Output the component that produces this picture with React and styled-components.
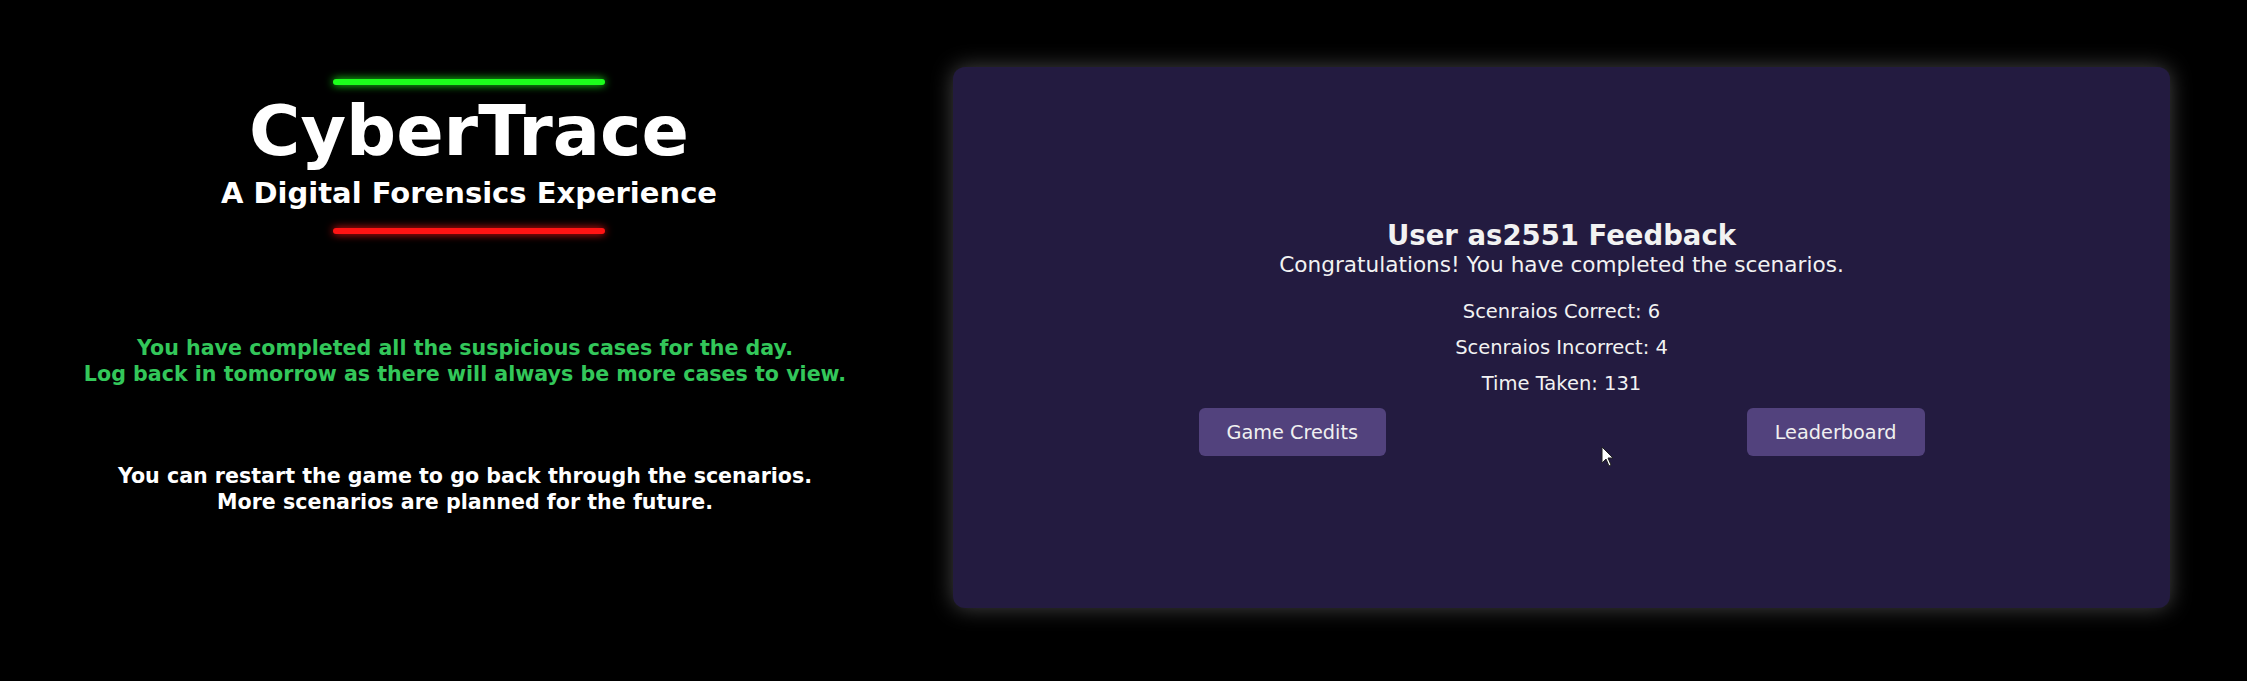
import styled, { createGlobalStyle } from "styled-components";

const GlobalStyle = createGlobalStyle`
  html, body {
    margin: 0;
    padding: 0;
    background: #000;
  }
  body {
    font-family: "DejaVu Sans", "Liberation Sans", sans-serif;
    color: #fff;
  }
`;

const Page = styled.div`
  display: flex;
  align-items: flex-start;
  gap: 23px;
  width: 2247px;
  height: 681px;
  padding-top: 67px;
  box-sizing: border-box;
  background: #000;
`;

const SideColumn = styled.div`
  width: 930px;
  display: flex;
  flex-direction: column;
  align-items: center;
  text-align: center;
`;

const Header = styled.div`
  display: flex;
  flex-direction: column;
  align-items: center;
  padding-left: 8px;
  margin-top: 12px;
`;

const NeonBar = styled.div`
  width: 272px;
  height: 6px;
  border-radius: 3px;
  background: ${(p) => p.$color};
  box-shadow: 0 0 8px ${(p) => p.$color};
`;

const Title = styled.h1`
  margin: 12px 0 0;
  font-size: 70px;
  line-height: 69px;
  font-weight: bold;
  color: #fff;
`;

const Subtitle = styled.h2`
  margin: 13px 0 20px;
  font-size: 29px;
  line-height: 29px;
  font-weight: bold;
  color: #fff;
`;

const Notice = styled.p`
  margin: ${(p) => p.$margin};
  font-size: 20.6px;
  line-height: 26px;
  font-weight: bold;
  color: ${(p) => p.$color};
`;

const Panel = styled.div`
  position: relative;
  width: 1217px;
  height: 541px;
  border-radius: 12px;
  background: #231b40;
  box-shadow: 0 0 22px rgba(200, 200, 200, 0.35);
  display: flex;
  flex-direction: column;
  align-items: center;
  justify-content: center;
  color: #f2f2f2;
`;

const FeedbackTitle = styled.h2`
  margin: 0;
  font-size: 27.5px;
  line-height: 32px;
  font-weight: bold;
`;

const Congrats = styled.p`
  margin: 0 0 15px;
  font-size: 21.6px;
  line-height: 28px;
`;

const Stat = styled.p`
  margin: 0;
  font-size: 19.5px;
  line-height: 36px;
`;

const ButtonRow = styled.div`
  display: flex;
  justify-content: space-between;
  width: 726px;
  margin-top: 6px;
`;

const Button = styled.button`
  height: 48px;
  padding: 0 28px;
  border: none;
  border-radius: 6px;
  background: #52427d;
  color: #f0f0f0;
  font-family: "DejaVu Sans", "Liberation Sans", sans-serif;
  font-size: 19.3px;
  cursor: pointer;
`;

const Cursor = styled.svg`
  position: absolute;
  left: 648px;
  top: 379px;
`;

export default function App() {
  return (
    <>
      <GlobalStyle />
      <Page>
        <SideColumn>
          <Header>
            <NeonBar $color="#1cff1c" />
            <Title>CyberTrace</Title>
            <Subtitle>A Digital Forensics Experience</Subtitle>
            <NeonBar $color="#ff1414" />
          </Header>
          <Notice $color="#33c75a" $margin="101px 0 0">
            You have completed all the suspicious cases for the day.
            <br />
            Log back in tomorrow as there will always be more cases to view.
          </Notice>
          <Notice $color="#ffffff" $margin="76px 0 0">
            You can restart the game to go back through the scenarios.
            <br />
            More scenarios are planned for the future.
          </Notice>
        </SideColumn>

        <Panel>
          <FeedbackTitle>User as2551 Feedback</FeedbackTitle>
          <Congrats>Congratulations! You have completed the scenarios.</Congrats>
          <Stat>Scenraios Correct: 6</Stat>
          <Stat>Scenraios Incorrect: 4</Stat>
          <Stat>Time Taken: 131</Stat>
          <ButtonRow>
            <Button>Game Credits</Button>
            <Button>Leaderboard</Button>
          </ButtonRow>
          <Cursor width="14" height="22" viewBox="0 0 14 22">
            <path d="M1 1 L1 17 L5 13 L8 20 L10 19 L7 12 L12 12 Z" fill="#fff" stroke="#222" strokeWidth="1" />
          </Cursor>
        </Panel>
      </Page>
    </>
  );
}
